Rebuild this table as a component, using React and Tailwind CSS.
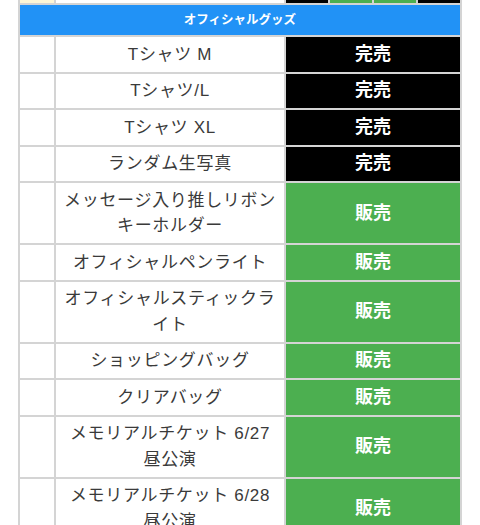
const items = [
  { name: "Tシャツ M", status: "完売" },
  { name: "Tシャツ/L", status: "完売" },
  { name: "Tシャツ XL", status: "完売" },
  { name: "ランダム生写真", status: "完売" },
  { name: "メッセージ入り推しリボンキーホルダー", status: "販売" },
  { name: "オフィシャルペンライト", status: "販売" },
  { name: "オフィシャルスティックライト", status: "販売" },
  { name: "ショッピングバッグ", status: "販売" },
  { name: "クリアバッグ", status: "販売" },
  { name: "メモリアルチケット 6/27 昼公演", status: "販売" },
  { name: "メモリアルチケット 6/28 昼公演", status: "販売" },
];

const font = {
  fontFamily:
    '"Liberation Sans", "Noto Sans CJK JP", "Noto Sans", sans-serif',
};

export default function App() {
  return (
    <div className="h-[525px] w-[480px] overflow-hidden bg-white" style={font}>
      <div className="mx-[18px]">
        <table className="w-full table-fixed border-collapse">
          <colgroup>
            <col className="w-[36px]" />
            <col className="w-[230px]" />
            <col className="w-[44px]" />
            <col className="w-[44px]" />
            <col className="w-[44px]" />
            <col className="w-[44px]" />
          </colgroup>
          <tbody>
            <tr className="h-[4px]">
              <td className="border-2 border-t-0 border-[#d4d4d4] bg-[#fdf6d6] p-0"></td>
              <td className="border-2 border-t-0 border-[#d4d4d4] bg-white p-0"></td>
              <td className="border-2 border-t-0 border-[#d4d4d4] bg-black p-0"></td>
              <td className="border-2 border-t-0 border-[#d4d4d4] bg-[#4caf50] p-0"></td>
              <td className="border-2 border-t-0 border-[#d4d4d4] bg-[#4caf50] p-0"></td>
              <td className="border-2 border-t-0 border-[#d4d4d4] bg-black p-0"></td>
            </tr>
            <tr>
              <td
                colSpan={6}
                className="h-[32px] border-2 border-[#d4d4d4] bg-[#2192f6] p-0 text-center text-[12.5px] font-bold text-white"
              >
                オフィシャルグッズ
              </td>
            </tr>
            {items.map((item) => {
              const soldOut = item.status === "完売";
              return (
                <tr key={item.name}>
                  <td className="border-2 border-[#d4d4d4] bg-white p-0"></td>
                  <td className="border-2 border-[#d4d4d4] bg-white px-[6px] py-[4.5px] text-center text-[17px] leading-[25.5px] tracking-[0.04em] text-[#3a3a3a]">
                    {item.name}
                  </td>
                  <td
                    colSpan={4}
                    className={`border-2 border-[#d4d4d4] p-0 text-center text-[18px] font-bold text-white ${
                      soldOut ? "bg-black" : "bg-[#4caf50]"
                    }`}
                  >
                    {item.status}
                  </td>
                </tr>
              );
            })}
          </tbody>
        </table>
      </div>
    </div>
  );
}
